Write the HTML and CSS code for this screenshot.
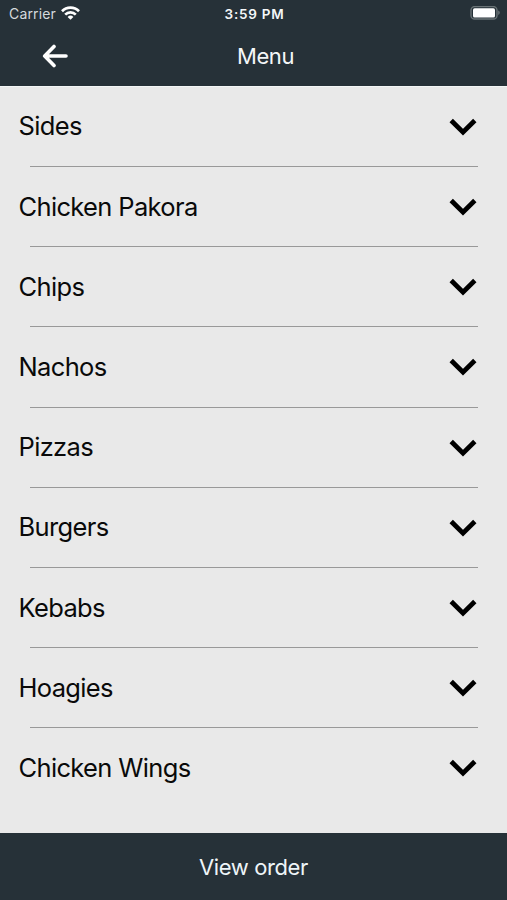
FILE: index.html
```html
<!DOCTYPE html>
<html lang="en">
<head>
<meta charset="utf-8">
<title>Menu</title>
<link rel="stylesheet" href="styles.css">
</head>
<body>
<header class="top">
  <div class="status">
    <div class="carrier"><span class="carrier-name">Carrier</span>
      <svg width="19" height="14" viewBox="0 0 19 14"><g fill="none" stroke="#fff" stroke-width="2.7"><path d="M1 5.2a12 12 0 0 1 17 0"/><path d="M4.2 8.6a7.5 7.5 0 0 1 10.6 0"/></g><path d="M9.5 13.8 6.6 10.9a4.1 4.1 0 0 1 5.8 0z" fill="#fff"/></svg>
    </div>
    <span class="clock">3:59 PM</span>
    <svg class="battery" width="31" height="14" viewBox="0 0 31 14"><rect x="2" y=".6" width="26" height="12.4" rx="3.6" fill="none" stroke="#6a7376" stroke-width="1.4"/><rect x="4" y="2.2" width="22" height="9.4" rx="1.6" fill="#fff"/><path d="M29.2 4.6q1.6.6 1.6 2.2t-1.6 2.2z" fill="#6a7376"/></svg>
  </div>
  <nav class="nav">
    <svg class="back" width="26" height="24" viewBox="0 0 26 24"><path d="M24 12H3M12 2.5 2.7 12l9.3 9.5" fill="none" stroke="#fff" stroke-width="3.6" stroke-linecap="round" stroke-linejoin="round"/></svg>
    <h1 class="title">Menu</h1>
  </nav>
</header>
<main class="list">
  <div class="row"><span class="name">Sides</span><svg class="chev" viewBox="0 0 28 18"><path d="m2.2 2.5 11.8 11.6L25.8 2.5"/></svg></div>
  <div class="row"><span class="name">Chicken Pakora</span><svg class="chev" viewBox="0 0 28 18"><path d="m2.2 2.5 11.8 11.6L25.8 2.5"/></svg></div>
  <div class="row"><span class="name">Chips</span><svg class="chev" viewBox="0 0 28 18"><path d="m2.2 2.5 11.8 11.6L25.8 2.5"/></svg></div>
  <div class="row"><span class="name">Nachos</span><svg class="chev" viewBox="0 0 28 18"><path d="m2.2 2.5 11.8 11.6L25.8 2.5"/></svg></div>
  <div class="row"><span class="name">Pizzas</span><svg class="chev" viewBox="0 0 28 18"><path d="m2.2 2.5 11.8 11.6L25.8 2.5"/></svg></div>
  <div class="row"><span class="name">Burgers</span><svg class="chev" viewBox="0 0 28 18"><path d="m2.2 2.5 11.8 11.6L25.8 2.5"/></svg></div>
  <div class="row"><span class="name">Kebabs</span><svg class="chev" viewBox="0 0 28 18"><path d="m2.2 2.5 11.8 11.6L25.8 2.5"/></svg></div>
  <div class="row"><span class="name">Hoagies</span><svg class="chev" viewBox="0 0 28 18"><path d="m2.2 2.5 11.8 11.6L25.8 2.5"/></svg></div>
  <div class="row"><span class="name">Chicken Wings</span><svg class="chev" viewBox="0 0 28 18"><path d="m2.2 2.5 11.8 11.6L25.8 2.5"/></svg></div>
</main>
<footer class="order"><span>View order</span></footer>
</body>
</html>
```
FILE: styles.css
```css
* { box-sizing: border-box; }
body {
  margin: 0;
  height: 900px;
  display: flex;
  flex-direction: column;
  background: #e9e9e9;
  color: #0a0a0a;
  font-family: Inter, "Liberation Sans", sans-serif;
}
svg { display: block; flex: none; }
.top { height: 86px; background: #263138; color: #f4f7f8; }
.status, .nav {
  display: grid;
  grid-template-columns: 1fr auto 1fr;
  align-items: center;
}
.status { height: 27px; padding: 0 7px 0 9px; }
.carrier { display: flex; align-items: center; gap: 5px; font-size: 14px; letter-spacing: 0.15px; color: #d5dadd; }
.carrier svg { margin-top: -2px; }
.clock { font-size: 13.5px; font-weight: 600; letter-spacing: 0.75px; }
.battery { justify-self: end; margin-top: -1px; }
.nav { height: 57px; padding-left: 42px; padding-right: 18px; }
.title { margin: 0; font-size: 22px; font-weight: 400; letter-spacing: -0.4px; grid-column: 2; }
.back { margin-top: 1px; }
.list { flex: 1; padding-top: 0.8px; border-top: 1px solid #f3f6f6; margin-bottom: -1px; }
.row {
  height: 80.2px;
  display: flex;
  align-items: center;
  justify-content: space-between;
  padding: 0 30px 2px 18.5px;
  background: linear-gradient(#999, #999) 30px 100% / 448px 1px no-repeat;
  margin-top: -1px;
  margin-bottom: 1px;
}
.row:last-child { background: none; }
.name { font-size: 25.5px; letter-spacing: -0.65px; }
.chev { width: 28px; height: 18px; margin-top: 2px; fill: none; stroke: #000; stroke-width: 4.8; }
.order {
  height: 67px;
  display: flex;
  align-items: center;
  justify-content: center;
  background: #263138;
  color: #eef5f8;
  font-size: 22px;
  letter-spacing: -0.4px;
}
```
